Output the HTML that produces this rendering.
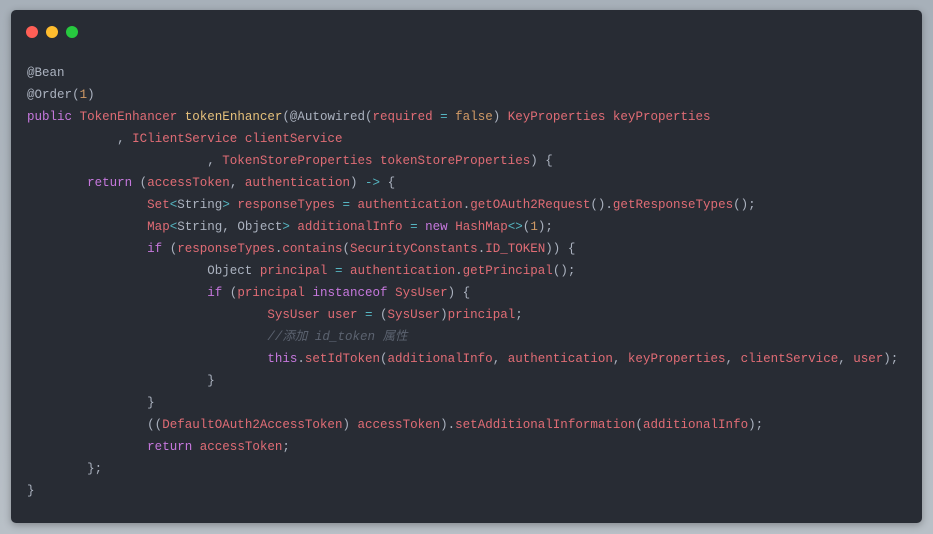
<!DOCTYPE html>
<html><head><meta charset="utf-8"><style>
html,body{margin:0;padding:0}
body{width:933px;height:534px;background:linear-gradient(180deg,#a7b0b9,#b9c0c7);position:relative;overflow:hidden}
.card{position:absolute;left:11px;top:10px;width:911px;height:513px;background:#282c34;border-radius:5px;box-shadow:0 2px 8px rgba(0,0,0,.3)}
.dot{position:absolute;top:26px;width:12px;height:12px;border-radius:50%}
pre{position:absolute;left:27px;top:62px;margin:0;font-family:"Liberation Mono","Noto Sans CJK SC",monospace;font-size:12.53px;line-height:22px;color:#abb2bf;white-space:pre}
.k{color:#c678dd}.r{color:#e06c75}.y{color:#e5c07b}.n{color:#d19a66}.o{color:#56b6c2}.c{color:#5c6370;font-style:italic}
</style></head><body>
<div class="card"></div>
<div class="dot" style="left:26px;background:#ff5f56"></div>
<div class="dot" style="left:46px;background:#ffbd2e"></div>
<div class="dot" style="left:66px;background:#27c93f"></div>
<pre>@Bean
@Order(<span class="n">1</span>)
<span class="k">public</span> <span class="r">TokenEnhancer</span> <span class="y">tokenEnhancer</span>(@Autowired(<span class="r">required</span> <span class="o">=</span> <span class="n">false</span>) <span class="r">KeyProperties keyProperties</span>
            , <span class="r">IClientService clientService</span>
                        , <span class="r">TokenStoreProperties tokenStoreProperties</span>) {
        <span class="k">return</span> (<span class="r">accessToken</span>, <span class="r">authentication</span>) <span class="o">-&gt;</span> {
                <span class="r">Set</span><span class="o">&lt;</span>String<span class="o">&gt;</span> <span class="r">responseTypes</span> <span class="o">=</span> <span class="r">authentication</span>.<span class="r">getOAuth2Request</span>().<span class="r">getResponseTypes</span>();
                <span class="r">Map</span><span class="o">&lt;</span>String, Object<span class="o">&gt;</span> <span class="r">additionalInfo</span> <span class="o">=</span> <span class="k">new</span> <span class="r">HashMap</span><span class="o">&lt;&gt;</span>(<span class="n">1</span>);
                <span class="k">if</span> (<span class="r">responseTypes</span>.<span class="r">contains</span>(<span class="r">SecurityConstants</span>.<span class="r">ID_TOKEN</span>)) {
                        Object <span class="r">principal</span> <span class="o">=</span> <span class="r">authentication</span>.<span class="r">getPrincipal</span>();
                        <span class="k">if</span> (<span class="r">principal</span> <span class="k">instanceof</span> <span class="r">SysUser</span>) {
                                <span class="r">SysUser</span> <span class="r">user</span> <span class="o">=</span> (<span class="r">SysUser</span>)<span class="r">principal</span>;
                                <span class="c">//添加 id_token 属性</span>
                                <span class="k">this</span>.<span class="r">setIdToken</span>(<span class="r">additionalInfo</span>, <span class="r">authentication</span>, <span class="r">keyProperties</span>, <span class="r">clientService</span>, <span class="r">user</span>);
                        }
                }
                ((<span class="r">DefaultOAuth2AccessToken</span>) <span class="r">accessToken</span>).<span class="r">setAdditionalInformation</span>(<span class="r">additionalInfo</span>);
                <span class="k">return</span> <span class="r">accessToken</span>;
        };
}</pre>
</body></html>
